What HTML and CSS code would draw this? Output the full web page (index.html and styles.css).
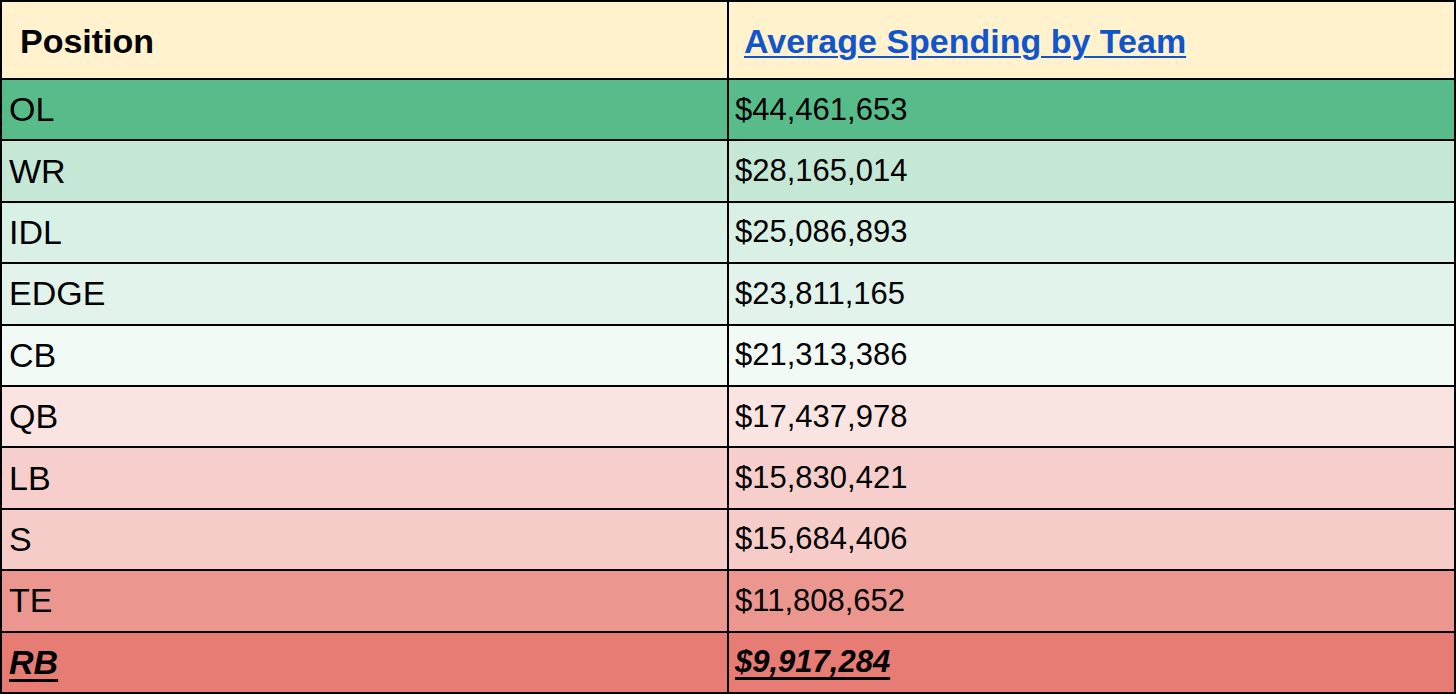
FILE: index.html
```html
<!DOCTYPE html>
<html>
<head>
<meta charset="utf-8">
<link rel="stylesheet" href="styles.css">
</head>
<body>
<div class="sheet">
  <div class="cell head head-left">Position</div>
  <div class="cell head head-right"><a class="link" href="#">Average Spending by Team</a></div>

  <div class="cell c-ol">OL</div><div class="cell c-ol val">$44,461,653</div>
  <div class="cell c-wr">WR</div><div class="cell c-wr val">$28,165,014</div>
  <div class="cell c-idl">IDL</div><div class="cell c-idl val">$25,086,893</div>
  <div class="cell c-edge">EDGE</div><div class="cell c-edge val">$23,811,165</div>
  <div class="cell c-cb">CB</div><div class="cell c-cb val">$21,313,386</div>
  <div class="cell c-qb">QB</div><div class="cell c-qb val">$17,437,978</div>
  <div class="cell c-lb">LB</div><div class="cell c-lb val">$15,830,421</div>
  <div class="cell c-s">S</div><div class="cell c-s val">$15,684,406</div>
  <div class="cell c-te">TE</div><div class="cell c-te val">$11,808,652</div>
  <div class="cell c-rb emph">RB</div><div class="cell c-rb val emph">$9,917,284</div>
</div>
</body>
</html>
```
FILE: styles.css
```css
html, body {
  margin: 0;
  padding: 0;
  background: #ffffff;
}

.sheet {
  width: 1456px;
  height: 694px;
  box-sizing: border-box;
  background: #000000;
  padding: 2px;
  display: grid;
  grid-template-columns: 725px 1fr;
  grid-template-rows: 76px repeat(10, 1fr);
  gap: 2px;
  font-family: "Liberation Sans", Arial, sans-serif;
  font-size: 34px;
  color: #000000;
}

.cell {
  display: flex;
  align-items: center;
  padding: 0 0 0 7px;
  white-space: nowrap;
}

.val {
  padding-left: 6px;
  font-size: 31px;
}

.head {
  background: #fff2cc;
  font-weight: bold;
  font-size: 34px;
  padding-top: 2px;
}

.head-left {
  padding-left: 18px;
}

.head-right {
  padding-left: 15px;
}

.link {
  color: #1155cc;
  text-decoration: underline;
  text-decoration-thickness: 2px;
  text-underline-offset: 3px;
}

.emph {
  font-weight: bold;
  font-style: italic;
  text-decoration: underline;
  text-decoration-thickness: 3px;
  text-underline-offset: 5px;
}

.c-ol { background: #57bb8a; }
.c-wr { background: #c4e7d6; }
.c-idl { background: #d9f0e4; }
.c-edge { background: #e1f3ea; }
.c-cb { background: #f2faf6; }
.c-qb { background: #fae4e2; }
.c-lb { background: #f6cecb; }
.c-s { background: #f5ccc8; }
.c-te { background: #eb968f; }
.c-rb { background: #e67c73; }
```
